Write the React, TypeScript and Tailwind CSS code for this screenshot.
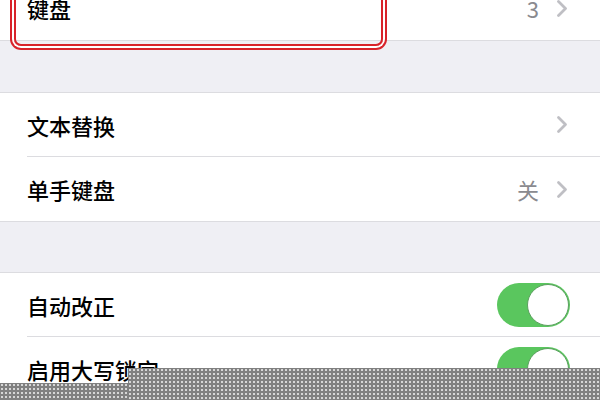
function Chevron() {
  return (
    <svg width="12" height="19" viewBox="0 0 12 19" fill="none">
      <path d="M2.5 2.5l7 7-7 7" stroke="#bfbfc4" strokeWidth="2.8" strokeLinecap="round" strokeLinejoin="round" />
    </svg>
  )
}

function Toggle() {
  return (
    <div className="flex h-[44px] w-[73px] items-center justify-end rounded-full bg-[#5ac65e] p-[1px]">
      <div className="h-[42px] w-[42px] rounded-full border-[1.5px] border-[#5c9f60] bg-white" />
    </div>
  )
}

function Row({ label, value, chevron, toggle, last }: { label: string; value?: string; chevron?: boolean; toggle?: boolean; last?: boolean }) {
  return (
    <div className="bg-white pl-[27px]">
      <div
        className={
          'flex h-[64px] items-center justify-between ' +
          (last ? '' : 'border-b border-[#dcdce0] ') +
          (toggle ? 'pr-[30px]' : 'pr-[32px]')
        }
      >
        <span className="text-[22px] font-medium leading-[30px] text-black">{label}</span>
        <div className="flex items-center gap-[17px]">
          {value && <span className="text-[22px] leading-[30px] text-[#8a8a8f]">{value}</span>}
          {chevron && <Chevron />}
          {toggle && <Toggle />}
        </div>
      </div>
    </div>
  )
}

function App() {
  return (
    <div
      className="relative h-[400px] w-[600px] overflow-hidden bg-[#efeff4]"
      style={{ fontFamily: '"Noto Sans CJK SC", "Noto Sans", sans-serif' }}
    >
      <div className="-mt-[24px] flex flex-col">
        <div className="border-b border-[#dcdce0] bg-white">
          <Row label="键盘" value="3" chevron last />
        </div>

        <div className="h-[52px] border-b border-[#dcdce0]" />
        <Row label="文本替换" chevron />
        <Row label="单手键盘" value="关" chevron last />
        <div className="h-[52px] border-y border-[#dcdce0]" />

        <Row label="自动改正" toggle />
        <Row label="启用大写锁定" toggle last />
      </div>

      {/* red annotation box */}
      <div className="absolute left-[14px] top-[-20px] h-[66px] w-[369px] rounded-[7px] border-2 border-[#d8232a] shadow-[0_0_0_2px_#fff,0_0_0_4px_#d8232a]" />

      {/* dotted mask at the bottom */}
      <div className="absolute left-0 top-[383px] h-[17px] w-[128px] bg-[#808080] bg-[radial-gradient(circle,#d6d6d6_0.9px,transparent_1.1px)] bg-size-[4px_4px]" />
      <div className="absolute left-[128px] top-[368px] h-[32px] w-[472px] bg-[#808080] bg-[radial-gradient(circle,#d6d6d6_0.9px,transparent_1.1px)] bg-size-[4px_4px]" />
    </div>
  )
}

export default App
